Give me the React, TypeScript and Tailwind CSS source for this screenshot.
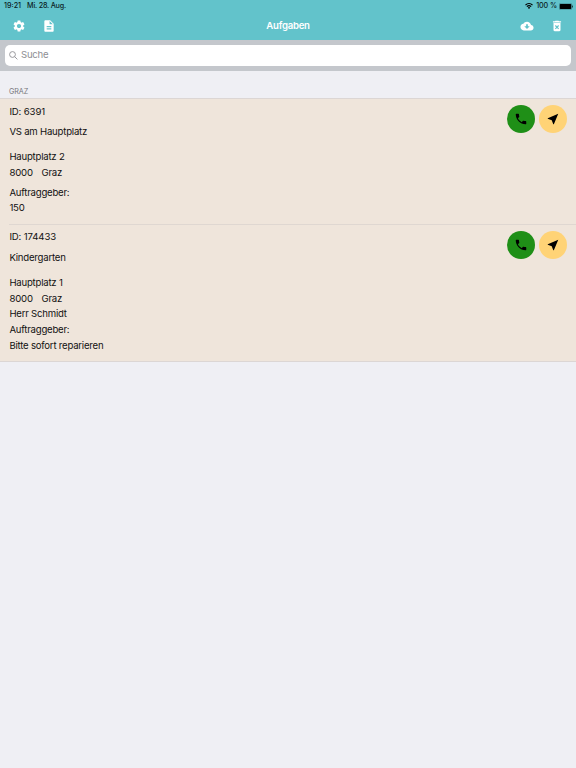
import { IoMdCloudDownload } from 'react-icons/io';
import { MdDeleteForever, MdDescription, MdNearMe, MdPhone, MdSettings } from 'react-icons/md';

interface Task {
    id: number;
    title: string;
    street: string;
    zip: string;
    city: string;
    contact?: string;
    client: string;
}

const tasks: Task[] = [
    { id: 6391, title: 'VS am Hauptplatz', street: 'Hauptplatz 2', zip: '8000', city: 'Graz', client: '150' },
    {
        id: 174433,
        title: 'Kindergarten',
        street: 'Hauptplatz 1',
        zip: '8000',
        city: 'Graz',
        contact: 'Herr Schmidt',
        client: 'Bitte sofort reparieren',
    },
];

function StatusBar() {
    return (
        <div className="flex h-3 items-center justify-between pl-1 pr-[3px] text-[7.2px] font-medium leading-3 text-[#0b1c1e]">
            <div className="flex gap-[6px]">
                <span>19:21</span>
                <span className="tracking-[-0.2px]">Mi. 28. Aug.</span>
            </div>
            <div className="flex items-center gap-[2px]">
                <svg viewBox="0 0 16 12" className="mr-[1px] h-[6px] w-2" fill="none" stroke="#000" strokeWidth="2.6">
                    <path d="M1 4.2a10 10 0 0 1 14 0" />
                    <path d="M3.8 7.3a6 6 0 0 1 8.4 0" />
                    <path d="M8 11.8 5.6 9.3a3.4 3.4 0 0 1 4.8 0Z" fill="#000" stroke="none" />
                </svg>
                <span className="tracking-[-0.1px]">100 %</span>
                <svg viewBox="0 0 28 14" className="h-[7px] w-[14px]">
                    <rect x="0.5" y="0.5" width="25" height="13" rx="3" fill="none" stroke="currentColor" opacity="0.5" />
                    <rect x="1.5" y="2" width="23" height="10" rx="1.5" fill="#000" />
                    <path d="M26.5 5v4a2 2 0 0 0 0-4Z" fill="currentColor" />
                </svg>
            </div>
        </div>
    );
}

function TaskRow({ task, last }: { task: Task; last: boolean }) {
    return (
        <li className="pl-[9px]">
            <div className={`flex justify-between pr-[8.6px] ${last ? 'pb-[7.5px] pt-[4.6px]' : 'border-b border-[#dfd7d1] pb-[7.5px] pt-[4.5px]'}`}>
                <div className="pl-[0.4px] text-[9.6px] leading-[15.8px] tracking-[-0.22px] text-[#111]">
                    <p className="tracking-[-0.14px]">ID: {task.id}</p>
                    <p className="mt-[4.5px]">{task.title}</p>
                    <p className="mt-[9.4px]">{task.street}</p>
                    <p className="flex gap-[8.6px]">
                        <span className="tracking-[-0.14px]">{task.zip}</span>
                        <span>{task.city}</span>
                    </p>
                    {task.contact ? <p>{task.contact}</p> : <div className="h-1" />}
                    <p>Auftraggeber:</p>
                    <p>{task.client}</p>
                </div>
                <div className="flex gap-[4.8px] pt-[1.5px]">
                    <button className="flex h-7 w-7 items-center justify-center rounded-full bg-[#1f8f17] text-black">
                        <MdPhone className="h-[14px] w-[14px]" />
                    </button>
                    <button className="flex h-7 w-7 items-center justify-center rounded-full bg-[#ffd376] text-black">
                        <MdNearMe className="h-[14px] w-[14px]" />
                    </button>
                </div>
            </div>
        </li>
    );
}

export default function App() {
    return (
        <div className="min-h-screen bg-[#efeff4] font-['Inter','Liberation_Sans',sans-serif]">
            <header className="h-10 bg-[#62c3cb]">
                <StatusBar />
                <div className="grid h-[27px] grid-cols-3 items-center px-[11.5px] text-white">
                    <div className="flex items-center gap-[16px]">
                        <MdSettings className="h-[14px] w-[14px]" />
                        <MdDescription className="h-[14px] w-[14px]" />
                    </div>
                    <h1 className="pt-[1.5px] text-center text-[9.6px] font-semibold tracking-[-0.25px]">Aufgaben</h1>
                    <div className="flex items-center justify-end gap-[16px]">
                        <IoMdCloudDownload className="h-[14px] w-[14px]" />
                        <MdDeleteForever className="h-[14px] w-[14px]" />
                    </div>
                </div>
            </header>

            <div className="h-[31px] bg-[#c4c7cc] px-[5px] pt-[5px]">
                <div className="flex h-[21px] items-center gap-[3px] rounded-[5px] bg-white pl-1 text-[#8e8e93]">
                    <svg viewBox="0 0 18 18" className="h-[9px] w-[9px]" fill="none" stroke="currentColor" strokeWidth="1.8">
                        <circle cx="7" cy="7" r="5.8" />
                        <path d="m11.3 11.3 5.5 5.5" />
                    </svg>
                    <span className="text-[9.6px] tracking-[-0.25px]">Suche</span>
                </div>
            </div>

            <section>
                <h2 className="h-[27px] pl-[9px] pt-[14px] text-[7.2px] leading-[13px] tracking-[-0.1px] text-[#77777c]">GRAZ</h2>
                <ul className="border-y border-[#dcd6d4] bg-[#efe5db]">
                    {tasks.map((task, i) => (
                        <TaskRow key={task.id} task={task} last={i === tasks.length - 1} />
                    ))}
                </ul>
            </section>
        </div>
    );
}
